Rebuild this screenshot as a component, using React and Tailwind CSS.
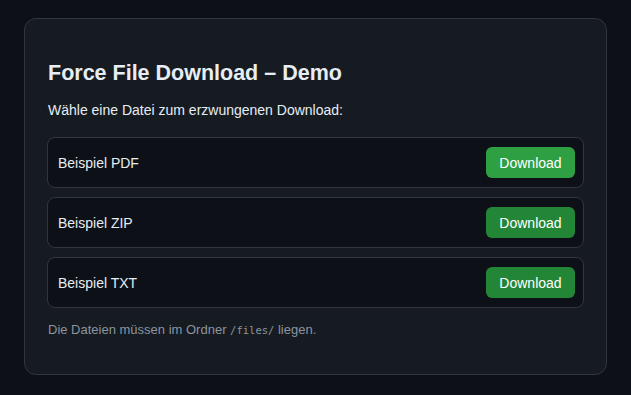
const files = [
    { name: "Beispiel PDF", hover: true },
    { name: "Beispiel ZIP" },
    { name: "Beispiel TXT" }
];

const App = () => {
    return (
        <div className="min-h-screen bg-[#0d1117] pt-[18px] px-6 font-['Liberation_Sans',Arial,sans-serif] text-[#e6edf3]">
            <div className="w-[583px] h-[357px] rounded-xl border border-[#30363d] bg-[#161b22] px-[22px] pt-[42px]">
                <h1 className="text-[21.5px] font-bold leading-6 mb-[15px] pl-px">Force File Download – Demo</h1>
                <p className="text-sm leading-5 mb-[17px] pl-px">Wähle eine Datei zum erzwungenen Download:</p>

                <div className="flex flex-col gap-[9px]">
                    {files.map((file) => (
                        <div
                            key={file.name}
                            className="flex h-[51px] items-center justify-between rounded-lg border border-[#30363d] bg-[#0d1117] pl-[10px] pr-[8px]"
                        >
                            <span className="text-sm">{file.name}</span>
                            <button
                                className={
                                    file.hover
                                        ? "h-[31px] w-[89px] rounded-md bg-[#2ea043] text-sm text-white"
                                        : "h-[31px] w-[89px] rounded-md bg-[#238636] text-sm text-white"
                                }
                            >
                                Download
                            </button>
                        </div>
                    ))}
                </div>

                <p className="mt-[12px] pl-px text-[13px] leading-5 text-[#8b949e]">
                    Die Dateien müssen im Ordner{" "}
                    <code className="font-['DejaVu_Sans_Mono',monospace] text-[10.5px]">/files/</code> liegen.
                </p>
            </div>
        </div>
    );
};

export default App;
